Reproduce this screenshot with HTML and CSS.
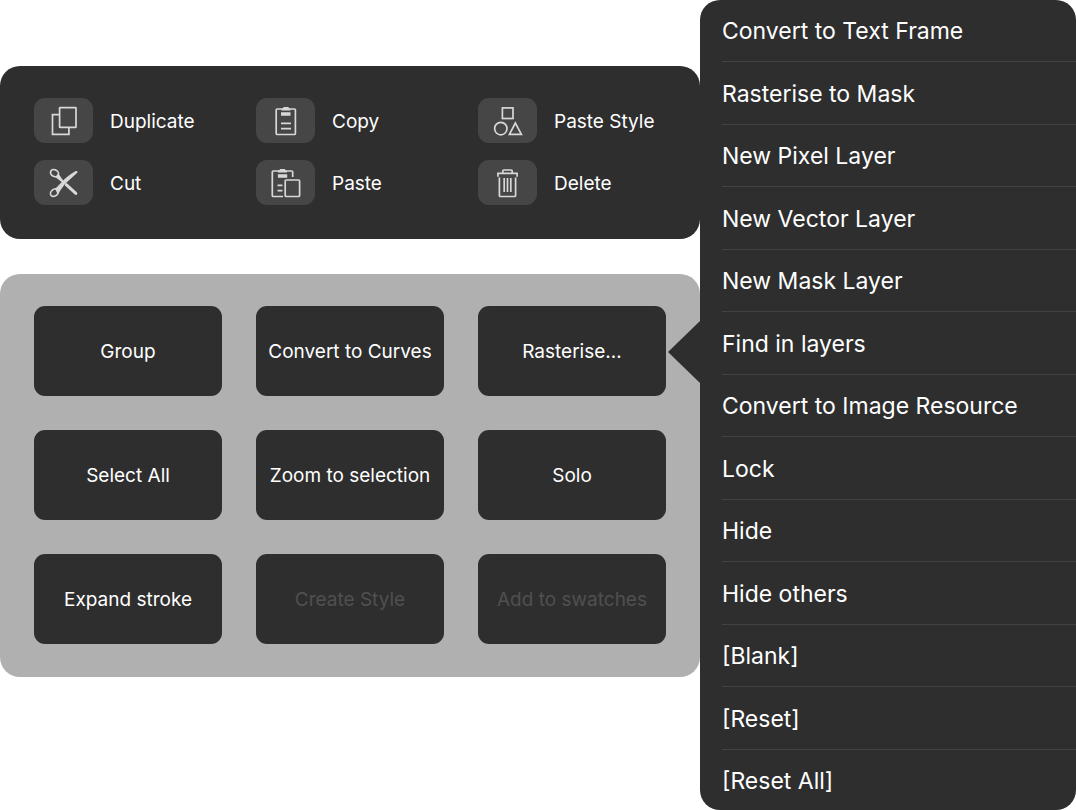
FILE: index.html
```
<!DOCTYPE html>
<html lang="en">
<head>
<meta charset="utf-8">
<meta name="viewport" content="width=device-width, initial-scale=1">
<title>Layer actions</title>
<link rel="stylesheet" href="styles.css">
</head>
<body>
<main class="layout">
  <div class="panels">
    <section class="panel edit-panel" aria-label="Edit">
      <button class="edit-action" type="button">
        <span class="icon-box"><svg class="icon" viewBox="0 0 32 32" aria-hidden="true"><rect x="11.600" y="2.600" width="16.400" height="19.800" rx=".5"/><path d="M11.600 9.600H4.500v19.800h16.400v-7"/></svg></span>
        <span class="edit-label">Duplicate</span>
      </button>
      <button class="edit-action" type="button">
        <span class="icon-box"><svg class="icon" viewBox="0 0 32 32" aria-hidden="true"><rect x="6.200" y="4" width="19.200" height="25.500" rx="1"/><path class="solid" d="M11.500 3.500h1.500L13.500 2h5l.5 1.500h1.500v2h-9zM11 7.200h9.500v3.600H11z"/><path d="M11 18.300h10M11 23.600h10"/></svg></span>
        <span class="edit-label">Copy</span>
      </button>
      <button class="edit-action" type="button">
        <span class="icon-box"><svg class="icon" viewBox="0 0 32 32" aria-hidden="true"><rect x="10.400" y="2.900" width="10.600" height="10.600"/><circle cx="8.800" cy="23.600" r="6.200"/><path d="M23.400 18l-6 11.400h12z"/></svg></span>
        <span class="edit-label">Paste Style</span>
      </button>
      <button class="edit-action" type="button">
        <span class="icon-box"><svg class="icon" viewBox="0 0 32 32" aria-hidden="true"><ellipse cx="6.500" cy="6.200" rx="4.200" ry="3.300" transform="rotate(30 6.500 6.200)"/><ellipse cx="6.500" cy="25.600" rx="4.400" ry="3.300" transform="rotate(-40 6.500 25.600)"/><path class="solid" d="M10.300 6.500l4.900 7-1.200 1.800-6.800-5.300zM7 21.800C11 19 16 10.500 27.300 4.200c1.800-.8 3 .4 1.700 1.800L16.700 17.200 9.700 27.300z"/><path class="blade" d="M18.200 17.700l9.600 8.700"/></svg></span>
        <span class="edit-label">Cut</span>
      </button>
      <button class="edit-action" type="button">
        <span class="icon-box"><svg class="icon" viewBox="0 0 32 32" aria-hidden="true"><path d="M13 29.500H3.300q-1 0-1-1V5q0-1 1-1h18.400q1 0 1 1v5"/><path class="solid" d="M8 3.500h1.500L10 2h5l.5 1.500H17v2H8zM7.900 7.200h9.300v3.600H7.900z"/><path d="M7.500 18.300h5M7.500 23.600h5"/><rect x="15.200" y="13" width="14.400" height="16.500" rx="1"/></svg></span>
        <span class="edit-label">Paste</span>
      </button>
      <button class="edit-action" type="button">
        <span class="icon-box"><svg class="icon" viewBox="0 0 32 32" aria-hidden="true"><path d="M5.900 9.700V6.300h19.200v3.400M10.800 6V4q0-1 1-1h7.400q1 0 1 1v2M7.400 10.500v18q0 1 1 1h14.200q1 0 1-1v-18M12.200 11v14M15.500 11v14M18.800 11v14"/></svg></span>
        <span class="edit-label">Delete</span>
      </button>
    </section>
    <section class="panel tile-panel" aria-label="Layer commands">
      <button class="tile" type="button">Group</button>
      <button class="tile" type="button">Convert to Curves</button>
      <button class="tile" type="button">Rasterise…</button>
      <button class="tile" type="button">Select All</button>
      <button class="tile" type="button">Zoom to selection</button>
      <button class="tile" type="button">Solo</button>
      <button class="tile" type="button">Expand stroke</button>
      <button class="tile" type="button" disabled>Create Style</button>
      <button class="tile" type="button" disabled>Add to swatches</button>
    </section>
  </div>
  <ul class="menu">
    <li class="menu-row"><button class="menu-item" type="button">Convert to Text Frame</button></li>
    <li class="menu-row"><button class="menu-item" type="button">Rasterise to Mask</button></li>
    <li class="menu-row"><button class="menu-item" type="button">New Pixel Layer</button></li>
    <li class="menu-row"><button class="menu-item" type="button">New Vector Layer</button></li>
    <li class="menu-row"><button class="menu-item" type="button">New Mask Layer</button></li>
    <li class="menu-row menu-row-anchor"><button class="menu-item" type="button">Find in layers</button></li>
    <li class="menu-row"><button class="menu-item" type="button">Convert to Image Resource</button></li>
    <li class="menu-row"><button class="menu-item" type="button">Lock</button></li>
    <li class="menu-row"><button class="menu-item" type="button">Hide</button></li>
    <li class="menu-row"><button class="menu-item" type="button">Hide others</button></li>
    <li class="menu-row"><button class="menu-item" type="button">[Blank]</button></li>
    <li class="menu-row"><button class="menu-item" type="button">[Reset]</button></li>
    <li class="menu-row"><button class="menu-item" type="button">[Reset All]</button></li>
  </ul>
</main>
</body>
</html>
```

FILE: styles.css
```
* {
  box-sizing: border-box;
}

body {
  margin: 0;
  background: #fff;
  color: #fff;
  font-family: Inter, "Liberation Sans", sans-serif;
}

button {
  margin: 0;
  padding: 0;
  border: 0;
  background: none;
  color: inherit;
  font: inherit;
  cursor: pointer;
}

.layout {
  display: grid;
  grid-template-columns: minmax(0, 1fr) 376px;
  align-items: start;
}

.panels {
  display: grid;
  gap: 35px;
  padding-top: 66px;
  font-size: 19px;
  line-height: 24px;
}

.panel {
  display: grid;
  grid-template-columns: repeat(3, minmax(0, 1fr));
  column-gap: 34px;
  padding: 32px 34px 34px;
  border-radius: 20px;
}

.edit-panel {
  row-gap: 17px;
  background: #2e2e2e;
}

.edit-action {
  display: flex;
  align-items: center;
  gap: 17px;
  text-align: left;
  white-space: nowrap;
}

.edit-label {
  padding-top: 2px;
}

.icon-box {
  display: flex;
  flex: none;
  align-items: center;
  justify-content: center;
  width: 59px;
  height: 45px;
  border-radius: 11px;
  background: #464646;
}

.icon {
  width: 32px;
  height: 32px;
  fill: none;
  stroke: #d8d8d8;
  stroke-width: 1.7;
}

.icon .solid {
  fill: #d8d8d8;
  stroke: none;
}

.icon .blade {
  stroke-width: 3;
  stroke-linecap: round;
}

.tile-panel {
  row-gap: 34px;
  padding-bottom: 33px;
  background: #b0b0b0;
}

.tile {
  min-height: 90px;
  padding-top: 2px;
  border-radius: 11px;
  background: #2e2e2e;
}

.tile:disabled {
  color: #505050;
  cursor: default;
}

.menu {
  margin: 0;
  padding: 0 0 0 22px;
  border-radius: 20px;
  background: #2e2e2e;
  font-size: 23px;
  line-height: 28px;
  list-style: none;
}

.menu-row {
  display: flex;
  height: 62px;
  border-bottom: 1px solid #424242;
}

.menu-row:nth-child(even) {
  height: 63px;
}

.menu-row:last-child {
  height: 60px;
  border-bottom: 0;
}

.menu-item {
  flex: 1;
  padding-top: 1px;
  text-align: left;
}

.menu-row-anchor {
  position: relative;
}

/* Callout arrow pointing at the tile that opened the menu */
.menu-row-anchor::before {
  content: "";
  position: absolute;
  top: 9px;
  right: 100%;
  width: 32px;
  height: 62px;
  margin-right: 22px;
  background: #2e2e2e;
  clip-path: polygon(0 50%, 100% 0, 100% 100%);
}
```
